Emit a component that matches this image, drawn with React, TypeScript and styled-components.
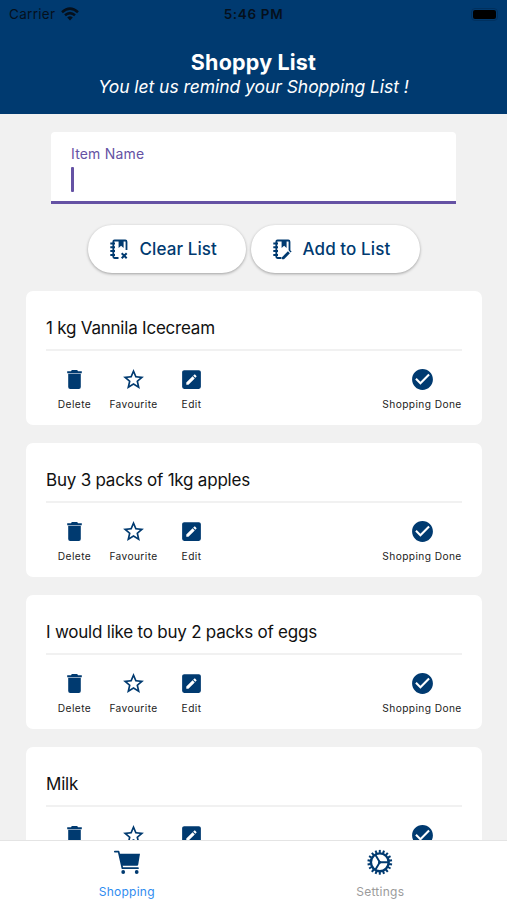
import React from "react";
import styled, { createGlobalStyle } from "styled-components";
import { MdStarBorder, MdCheckCircle } from "react-icons/md";

const NAVY = "#003a70";
const VIOLET = "#6552a4";

const GlobalStyle = createGlobalStyle`
  * { box-sizing: border-box; }
  body { margin: 0; background: #f1f1f1; font-family: Inter, "Liberation Sans", sans-serif; }
  svg { display: block; flex-shrink: 0; }
`;

const Screen = styled.div`
  width: 507px;
  height: 900px;
  display: flex;
  flex-direction: column;
  overflow: hidden;
  background: #f1f1f1;
`;

const Header = styled.header`
  height: 114px;
  flex-shrink: 0;
  background: ${NAVY};
  color: #fff;
  text-align: center;
`;

const StatusBar = styled.div`
  height: 28px;
  padding: 0 9px;
  display: grid;
  grid-template-columns: 1fr auto 1fr;
  align-items: center;
  color: #05101c;
`;

const Carrier = styled.div`
  display: flex;
  align-items: center;
  gap: 6px;
  font-size: 13.5px;
  letter-spacing: 0.3px;
`;

const Clock = styled.div`
  font-size: 13.5px;
  font-weight: 600;
  letter-spacing: 0.65px;
`;

const Battery = styled.div`
  justify-self: end;
  width: 27px;
  height: 13px;
  border: 1px solid #00305e;
  border-radius: 4px;
  padding: 1px;
  &::before {
    content: "";
    display: block;
    height: 9px;
    border-radius: 2px;
    background: #000;
  }
`;

const Title = styled.h1`
  margin: 21px 0 0;
  font-size: 21.5px;
  line-height: 26px;
  font-weight: 700;
  letter-spacing: 0.18px;
`;

const Tagline = styled.p`
  margin: 0;
  font-size: 17.5px;
  line-height: 24px;
  letter-spacing: -0.05px;
  font-style: italic;
`;

const Content = styled.main`
  flex: 1;
  min-height: 0;
  overflow: hidden;
  display: flex;
  flex-direction: column;
  padding: 18px 25px 0 26px;
`;

const Field = styled.div`
  flex-shrink: 0;
  height: 72px;
  margin: 0 26px 0 25px;
  padding: 13px 20px 0;
  background: #fff;
  border-bottom: 3px solid ${VIOLET};
  border-radius: 4px 4px 0 0;
`;

const FieldLabel = styled.div`
  font-size: 14px;
  line-height: 18px;
  letter-spacing: 0.18px;
  color: ${VIOLET};
`;

const Caret = styled.div`
  margin-top: 4px;
  width: 3px;
  height: 25px;
  border-radius: 1px;
  background: ${VIOLET};
`;

const Actions = styled.div`
  flex-shrink: 0;
  display: flex;
  justify-content: center;
  gap: 5px;
  margin: 21px 0 18px;
`;

const PillButton = styled.button<{ $width: number }>`
  width: ${(p) => p.$width}px;
  height: 48px;
  padding: 0 0 0 19px;
  display: flex;
  align-items: center;
  gap: 8.5px;
  border: 0;
  border-radius: 24px;
  background: #fff;
  color: ${NAVY};
  font: 500 17px Inter, sans-serif;
  letter-spacing: 0.1px;
  white-space: nowrap;
  box-shadow: 0 1px 3px rgba(0, 0, 0, 0.34);
`;

const Cards = styled.div`
  display: flex;
  flex-direction: column;
  gap: 18px;
`;

const Card = styled.section`
  flex-shrink: 0;
  height: 134px;
  padding: 0 20px;
  border-radius: 7px;
  background: #fff;
`;

const CardTitle = styled.h2`
  margin: 0;
  height: 60px;
  padding-top: 25px;
  border-bottom: 2px solid #f1f1f1;
  color: #111;
  font-size: 17px;
  line-height: 24px;
  font-weight: 400;
  letter-spacing: -0.22px;
`;

const Tools = styled.div`
  display: flex;
  justify-content: space-between;
  padding-top: 16px;
`;

const ToolGroup = styled.div`
  display: flex;
`;

const Tool = styled.div<{ $width: number }>`
  width: ${(p) => p.$width}px;
  display: flex;
  flex-direction: column;
  align-items: center;
  color: ${NAVY};
`;

const ToolLabel = styled.span`
  margin-top: 5px;
  color: #222;
  font-size: 10.2px;
  line-height: 14px;
  letter-spacing: 0.4px;
  white-space: nowrap;
`;

const TabBar = styled.nav`
  flex-shrink: 0;
  height: 60px;
  display: grid;
  grid-template-columns: 1fr 1fr;
  border-top: 1px solid #e4e4e4;
  background: #fff;
`;

const Tab = styled.div<{ $active?: boolean }>`
  display: flex;
  flex-direction: column;
  align-items: center;
  padding-top: 5px;
  gap: 7px;
  font-size: 12px;
  line-height: 16px;
  letter-spacing: 0.25px;
  color: ${(p) => (p.$active ? "#2f8cf0" : "#9b9b9b")};
  svg { color: ${NAVY}; }
`;

function WifiIcon() {
  return (
    <svg width="18" height="14" viewBox="0 0 18 14" fill="none" stroke="currentColor" strokeWidth="2.5">
      <path d="M1 5.2Q9-2 17 5.2M4 8.3Q9 4 14 8.3" />
      <path d="M6.2 10.5Q9 8.2 11.8 10.5L9 13.4Z" fill="currentColor" stroke="none" />
    </svg>
  );
}

function NotebookIcon({ kind }: { kind: "remove" | "edit" }) {
  return (
    <svg width="24" height="24" viewBox="0 0 24 24" fill="none" stroke="currentColor" strokeWidth="1.8">
      <path d="M11.5 21H7.5Q6.3 21 6.3 19.8V4.7Q6.3 3.5 7.5 3.5H18.3Q19.5 3.5 19.5 4.7V13" />
      <path d="M3.3 6.5H8M3.3 10.3H8M3.3 14.1H8M3.3 17.9H8" strokeWidth="2" />
      <path d="M11.6 3H16.6V11L14.1 8.8L11.6 11Z" fill="currentColor" stroke="none" />
      {kind === "remove" ? (
        <path d="M14.7 16.2L19.7 21.2M19.7 16.2L14.7 21.2" strokeWidth="2" />
      ) : (
        <path d="M12 20.2L17.9 14.3L19.9 16.3L14 22.2H12ZM18.6 13.6L19.6 12.6L21.6 14.6L20.6 15.6Z" fill="currentColor" stroke="none" />
      )}
    </svg>
  );
}

function TrashIcon() {
  return (
    <svg width="25" height="25" viewBox="0 0 25 25" fill="currentColor">
      <path d="M5.2 4.2H9L9.8 3H15.2L16 4.2H19.8V6.3H5.2Z" />
      <path d="M6.2 6.8H18.8V20Q18.8 22 16.8 22H8.2Q6.2 22 6.2 20Z" />
    </svg>
  );
}

function PencilBoxIcon() {
  return (
    <svg width="25" height="25" viewBox="0 0 24 24" fill="currentColor">
      <path d="M19,3H5C3.89,3 3,3.89 3,5V19A2,2 0 0,0 5,21H19A2,2 0 0,0 21,19V5C21,3.89 20.1,3 19,3M16.7,9.35L15.7,10.35L13.65,8.3L14.65,7.3C14.86,7.08 15.21,7.08 15.42,7.3L16.7,8.58C16.92,8.79 16.92,9.14 16.7,9.35M7,14.94L13.06,8.88L15.12,10.94L9.06,17H7V14.94Z" />
    </svg>
  );
}

function CartIcon() {
  return (
    <svg width="32" height="31" viewBox="0 0 32 31" fill="none" stroke="currentColor">
      <path d="M3.8 5.6H7.6L11.4 22.2H27" strokeWidth="1.7" strokeLinecap="round" strokeLinejoin="round" />
      <path d="M8 7.8H29L27.2 18.8Q27 19.8 26 19.8H10.8Z" fill="currentColor" stroke="none" />
      <circle cx="12.2" cy="26" r="1.9" fill="currentColor" stroke="none" />
      <circle cx="25.7" cy="26" r="1.9" fill="currentColor" stroke="none" />
    </svg>
  );
}

const TEETH = Array.from({ length: 18 }, (_, i) => i * 20);

function CogIcon() {
  return (
    <svg width="32" height="31" viewBox="0 0 32 31" fill="none" stroke="currentColor">
      <circle cx="15.8" cy="16.3" r="8.9" strokeWidth="2.4" />
      {TEETH.map((angle) => (
        <path key={angle} d="M15.8 6.9V3.9" strokeWidth="2" transform={`rotate(${angle} 15.8 16.3)`} />
      ))}
      <path d="M15.8 16.3H24M15.8 16.3L11.5 9M15.8 16.3L11.5 23.6" strokeWidth="1.9" />
      <circle cx="15.6" cy="16.3" r="1.5" fill="currentColor" stroke="none" />
    </svg>
  );
}

const items = [
  "1 kg Vannila Icecream",
  "Buy 3 packs of 1kg apples",
  "I would like to buy 2 packs of eggs",
  "Milk",
];

function ShoppingItem({ name }: { name: string }) {
  return (
    <Card>
      <CardTitle>{name}</CardTitle>
      <Tools>
        <ToolGroup>
          <Tool $width={57}><TrashIcon /><ToolLabel>Delete</ToolLabel></Tool>
          <Tool $width={61}><MdStarBorder size={25} /><ToolLabel>Favourite</ToolLabel></Tool>
          <Tool $width={55}><PencilBoxIcon /><ToolLabel>Edit</ToolLabel></Tool>
        </ToolGroup>
        <Tool $width={80}><MdCheckCircle size={25} /><ToolLabel>Shopping Done</ToolLabel></Tool>
      </Tools>
    </Card>
  );
}

export default function App() {
  return (
    <Screen>
      <GlobalStyle />
      <Header>
        <StatusBar>
          <Carrier>Carrier <WifiIcon /></Carrier>
          <Clock>5:46 PM</Clock>
          <Battery />
        </StatusBar>
        <Title>Shoppy List</Title>
        <Tagline>You let us remind your Shopping List !</Tagline>
      </Header>
      <Content>
        <Field>
          <FieldLabel>Item Name</FieldLabel>
          <Caret />
        </Field>
        <Actions>
          <PillButton $width={158}><NotebookIcon kind="remove" />Clear List</PillButton>
          <PillButton $width={169}><NotebookIcon kind="edit" />Add to List</PillButton>
        </Actions>
        <Cards>
          {items.map((name) => <ShoppingItem key={name} name={name} />)}
        </Cards>
      </Content>
      <TabBar>
        <Tab $active><CartIcon />Shopping</Tab>
        <Tab><CogIcon />Settings</Tab>
      </TabBar>
    </Screen>
  );
}
